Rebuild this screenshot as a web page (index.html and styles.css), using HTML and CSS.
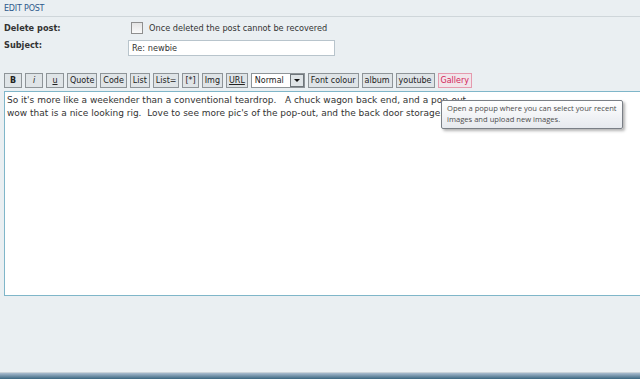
FILE: index.html
```html
<!DOCTYPE html>
<html lang="en">
<head>
    <meta charset="UTF-8">
    <title>Edit post</title>
    <link rel="stylesheet" href="styles.css">
</head>
<body>
    <div class="page">
        <h3 class="panel-title">EDIT POST</h3>
        <div class="row">
            <label class="row-label">Delete post:</label>
            <div class="row-field">
                <span class="checkbox"></span>
                <span class="hint">Once deleted the post cannot be recovered</span>
            </div>
        </div>
        <div class="row">
            <label class="row-label">Subject:</label>
            <div class="row-field">
                <div class="subject">Re: newbie</div>
            </div>
        </div>

        <div class="toolbar">
            <span class="btn btn-b">B</span>
            <span class="btn btn-i">i</span>
            <span class="btn btn-u">u</span>
            <span class="btn">Quote</span>
            <span class="btn">Code</span>
            <span class="btn">List</span>
            <span class="btn">List=</span>
            <span class="btn">[*]</span>
            <span class="btn">Img</span>
            <span class="btn btn-url">URL</span>
            <span class="select">Normal<span class="select-arrow"></span></span>
            <span class="btn">Font colour</span>
            <span class="btn">album</span>
            <span class="btn">youtube</span>
            <span class="btn btn-gallery">Gallery</span>
        </div>

        <div class="editor">
            <p>So it's more like a weekender than a conventional teardrop. &nbsp; A chuck wagon back end, and a pop-out</p>
            <p>wow that is a nice looking rig. &nbsp;Love to see more pic's of the pop-out, and the back door storage.</p>
            <div class="tooltip">Open a popup where you can select your recent<br>images and upload new images.</div>
        </div>
    </div>
    <div class="taskbar"></div>
</body>
</html>
```

FILE: styles.css
```css
html, body {
    margin: 0;
    padding: 0;
}
body {
    width: 640px;
    height: 379px;
    overflow: hidden;
    background-color: #eaeff2;
    font-family: 'DejaVu Sans', Verdana, sans-serif;
    font-size: 9px;
    color: #333;
    display: flex;
    flex-direction: column;
}
.page {
    flex: 1;
    padding-top: 4px;
}
.panel-title {
    margin: 0;
    padding: 0 0 3px 4px;
    font-size: 8px;
    font-weight: normal;
    color: #2e5a8c;
    letter-spacing: -0.2px;
    border-bottom: 1px solid #cfd6da;
    line-height: 9px;
}
.row {
    display: flex;
    align-items: center;
    padding-left: 4px;
    font-size: 8.2px;
}
.row:nth-of-type(1) {
    margin-top: 5px;
}
.row-label {
    width: 124px;
    font-weight: bold;
    color: #333;
}
.row-field {
    display: flex;
    align-items: center;
}
.checkbox {
    width: 10px;
    height: 10px;
    border: 1px solid #8f8f8f;
    background: linear-gradient(#e4e4e4, #fafafa);
    margin: 0 6px 0 3px;
}
.hint {
    color: #333;
}
.subject {
    width: 202px;
    height: 14px;
    line-height: 14px;
    padding-left: 3px;
    border: 1px solid #b8c4cc;
    background: #fff;
    margin-top: 6px;
}
.toolbar {
    display: flex;
    gap: 3px;
    padding-left: 4px;
    margin-top: 17px;
    font-size: 8px;
}
.btn {
    height: 13px;
    line-height: 13px;
    padding: 0 2px;
    border: 1px solid #8e9498;
    background: #dfe4e7;
    color: #222;
}
.btn-b, .btn-i, .btn-u {
    width: 12px;
    text-align: center;
}
.btn-b { font-weight: bold; }
.btn-i { font-style: italic; }
.btn-u, .btn-url { text-decoration: underline; }
.select {
    display: flex;
    align-items: center;
    height: 13px;
    padding-left: 3px;
    border: 1px solid #8e9498;
    background: #fff;
    color: #222;
    gap: 6px;
}
.select-arrow {
    width: 12px;
    height: 11px;
    border: 1px solid #6f767b;
    background: #dfe4e7;
    position: relative;
}
.select-arrow::after {
    content: "";
    position: absolute;
    left: 3px;
    top: 4px;
    border-left: 3px solid transparent;
    border-right: 3px solid transparent;
    border-top: 3px solid #111;
}
.btn-gallery {
    border-color: #e59aae;
    color: #d2245a;
    background: #f1e5ea;
}
.editor {
    position: relative;
    margin: 3px 0 0 4px;
    height: 199px;
    background: #fff;
    border: 1px solid #7fb6c9;
    border-right: none;
    padding: 2px 2px;
    color: #333;
    font-size: 9px;
}
.editor p {
    margin: 0;
    line-height: 13px;
}
.tooltip {
    position: absolute;
    left: 436px;
    top: 8px;
    padding: 2px 5px 3px;
    white-space: nowrap;
    font-family: 'Open Sans', sans-serif;
    font-size: 7.6px;
    line-height: 11px;
    color: #4c4c4c;
    background: linear-gradient(#ffffff, #e6e9ee);
    border: 1px solid #7a7f86;
    border-radius: 2px;
    box-shadow: 2px 2px 3px rgba(0, 0, 0, 0.3);
}
.taskbar {
    height: 6px;
    border-top: 1px solid #c9d2d8;
    background: linear-gradient(#a9bccf, #3a6680);
}
```
